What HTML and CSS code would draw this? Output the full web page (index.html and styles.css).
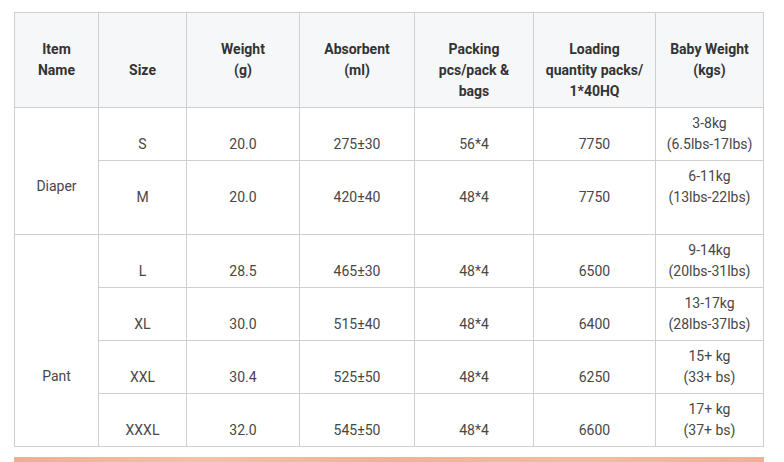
FILE: index.html
```html
<!DOCTYPE html>
<html lang="en">
<head>
<meta charset="utf-8">
<title>Diaper specifications</title>
<link rel="stylesheet" href="styles.css">
</head>
<body>
<div class="page">
  <table class="spec">
    <colgroup>
      <col class="c1"><col class="c2"><col class="c3"><col class="c4"><col class="c5"><col class="c6"><col class="c7">
    </colgroup>
    <thead>
      <tr>
        <th>Item<br>Name</th>
        <th class="th-low">Size</th>
        <th>Weight<br>(g)</th>
        <th>Absorbent<br>(ml)</th>
        <th>Packing<br>pcs/pack &amp;<br>bags</th>
        <th>Loading<br>quantity packs/<br>1*40HQ</th>
        <th>Baby Weight<br>(kgs)</th>
      </tr>
    </thead>
    <tbody>
      <tr>
        <td rowspan="2" class="group group-diaper">Diaper</td>
        <td>S</td><td>20.0</td><td>275±30</td><td>56*4</td><td>7750</td>
        <td>3-8kg<br>(6.5lbs-17lbs)</td>
      </tr>
      <tr class="row-mid">
        <td>M</td><td>20.0</td><td>420±40</td><td>48*4</td><td>7750</td>
        <td class="kg-top">6-11kg<br>(13lbs-22lbs)</td>
      </tr>
      <tr>
        <td rowspan="4" class="group group-pant">Pant</td>
        <td>L</td><td>28.5</td><td>465±30</td><td>48*4</td><td>6500</td>
        <td>9-14kg<br>(20lbs-31lbs)</td>
      </tr>
      <tr>
        <td>XL</td><td>30.0</td><td>515±40</td><td>48*4</td><td>6400</td>
        <td>13-17kg<br>(28lbs-37lbs)</td>
      </tr>
      <tr>
        <td>XXL</td><td>30.4</td><td>525±50</td><td>48*4</td><td>6250</td>
        <td>15+ kg<br>(33+ bs)</td>
      </tr>
      <tr>
        <td>XXXL</td><td>32.0</td><td>545±50</td><td>48*4</td><td>6600</td>
        <td>17+ kg<br>(37+ bs)</td>
      </tr>
    </tbody>
  </table>
  <div class="accent-bar"></div>
</div>
</body>
</html>
```
FILE: styles.css
```css
html, body {
  margin: 0;
  padding: 0;
  background: #ffffff;
}

body {
  font-family: Roboto, "Liberation Sans", Arial, sans-serif;
  font-size: 14px;
  color: #474747;
}

.page {
  padding: 12px 0 0 14px;
}

.spec {
  border-collapse: collapse;
  table-layout: fixed;
  width: 750px;
}

.c1 { width: 84px; }
.c2 { width: 88px; }
.c3 { width: 113px; }
.c4 { width: 115px; }
.c5 { width: 119px; }
.c6 { width: 122px; }
.c7 { width: 108px; }

.spec th,
.spec td {
  border: 1px solid #cfcfcf;
  text-align: center;
  line-height: 21px;
  padding: 5px 2px;
}

.spec th {
  background: #f6f7f9;
  color: #333333;
  font-weight: 700;
  vertical-align: top;
  padding-top: 26px;
}

.spec th.th-low {
  padding-top: 47px;
}

.spec td {
  vertical-align: bottom;
}

.row-mid td {
  vertical-align: middle;
}

.row-mid td.kg-top {
  vertical-align: top;
  padding-bottom: 26px;
}

.spec td.group {
  vertical-align: middle;
}

.spec td.group-diaper {
  padding-top: 36px;
}

.spec td.group-pant {
  padding-top: 77px;
}

.accent-bar {
  width: 750px;
  height: 8px;
  margin-top: 10px;
  background: linear-gradient(90deg, #eeae90 0%, #f2c2a8 25%, #eeb294 50%, #f1bda2 75%, #eeb194 100%);
}
```
